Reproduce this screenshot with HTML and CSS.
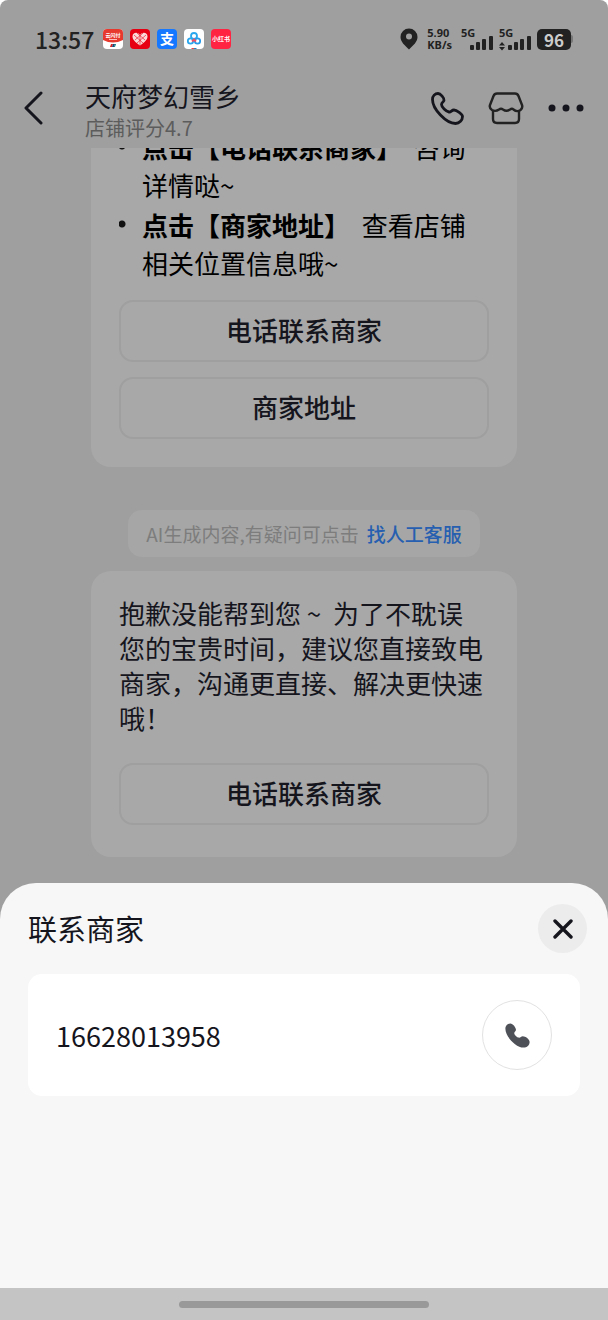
FILE: index.html
```html
<!DOCTYPE html>
<html lang="zh-CN">
<head>
    <meta charset="UTF-8">
    <meta name="viewport" content="width=device-width, initial-scale=1.0">
    <title>天府梦幻雪乡</title>
    <link rel="stylesheet" href="styles.css">
</head>
<body>
    <div class="screen">
        <div class="status-bar">
            <span class="clock">13:57</span>
            <div class="app-icons">
                <svg width="20" height="20" viewBox="0 0 20 20">
                    <rect width="20" height="20" rx="4" fill="#fff"/>
                    <path d="M0 11V4a4 4 0 0 1 4-4h12a4 4 0 0 1 4 4v7q-10 5-20 0z" fill="#e8392f"/>
                    <text x="10" y="8" class="icon-text" font-size="5">云闪付</text>
                    <path d="M6 10.5h8" stroke="#fbb" stroke-width="1"/>
                    <path d="M8 15h2l-1 3H7z" fill="#d22"/>
                    <path d="M10 15h2l-1 3H9z" fill="#124a80"/>
                    <path d="M12 15h1l-1 3h-1z" fill="#087a75"/>
                </svg>
                <svg width="20" height="20" viewBox="0 0 20 20">
                    <rect width="20" height="20" rx="4" fill="#e60012"/>
                    <path d="M10 16.5C5 13 2.5 10.5 2.5 7.5 2.5 3.500 7.500 2.500 10 6c2.500-3.500 7.500-2.500 7.500 1.500 0 3-2.500 5.500-7.500 9z" fill="#fbdada"/>
                    <path d="M4 6l9 8M7 4l8 7M16 6l-9 8M13 4l-8 7M10 6v10" stroke="#e60012" stroke-width=".6"/>
                </svg>
                <svg width="20" height="20" viewBox="0 0 20 20">
                    <rect width="20" height="20" rx="4" fill="#1677ff"/>
                    <text x="10" y="15" class="icon-text" font-size="14">支</text>
                </svg>
                <svg width="20" height="20" viewBox="0 0 20 20">
                    <rect width="20" height="20" rx="4" fill="#fff"/>
                    <g fill="none" stroke-width="1.8">
                        <circle cx="10" cy="7" r="3" stroke="#2ba7ee"/>
                        <circle cx="6.500" cy="12" r="2.700" stroke="#2ba7ee"/>
                        <circle cx="13.500" cy="12" r="2.700" stroke="#2a9be8"/>
                        <path d="M8 12.500l2-2 2 2" stroke="#ee4f66"/>
                    </g>
                    <path d="M7 20l1-1h2v1z" fill="#e44"/>
                    <path d="M10 19h2l1 1h-3z" fill="#28c"/>
                </svg>
                <svg width="20" height="20" viewBox="0 0 20 20">
                    <rect width="20" height="20" rx="4" fill="#ff2442"/>
                    <text x="10" y="12" class="icon-text" font-size="6">小红书</text>
                </svg>
            </div>
            <div class="status-right">
                <svg width="18" height="22" viewBox="0 0 18 22">
                    <path d="M9 .5A8.500 8.500 0 0 0 .5 9C.5 14 5 17.500 9 21.500 13 17.500 17.500 14 17.500 9A8.500 8.500 0 0 0 9 .5z" fill="#222"/>
                    <circle cx="9" cy="8.500" r="3" fill="#9f9f9f"/>
                </svg>
                <div class="speed"><span>5.90</span><span>KB/s</span></div>
                <svg class="signal" width="32" height="26" viewBox="0 -3 32 26" fill="#222">
                    <text x="0" y="8" class="net-text">5G</text>
                    <rect x="9" y="16" width="4" height="5" rx="1"/>
                    <rect x="15" y="13" width="4" height="8" rx="1"/>
                    <rect x="21" y="10" width="4" height="11" rx="1"/>
                    <rect x="28" y="7" width="4" height="14" rx="1"/>
                </svg>
                <svg class="signal" width="32" height="26" viewBox="0 -3 32 26" fill="#222">
                    <text x="0" y="8" class="net-text">5G</text>
                    <path d="M0 16.500l3-3.500 3 3.500zM0 18l3 3.500L6 18z"/>
                    <rect x="9" y="16" width="4" height="5" rx="1"/>
                    <rect x="15" y="13" width="4" height="8" rx="1"/>
                    <rect x="21" y="10" width="4" height="11" rx="1"/>
                    <rect x="28" y="7" width="4" height="14" rx="1"/>
                </svg>
                <div class="battery"><span class="battery-level">96</span><span class="battery-tip"></span></div>
            </div>
        </div>

        <header class="header">
            <button type="button" class="icon-btn" aria-label="返回">
                <svg width="20" height="34" viewBox="0 0 20 34" fill="none" stroke="#15151d" stroke-width="3" stroke-linecap="round" stroke-linejoin="round">
                    <path d="M17 2L2 17l15 15"/>
                </svg>
            </button>
            <div class="shop">
                <h1>天府梦幻雪乡</h1>
                <p>店铺评分4.7</p>
            </div>
            <div class="actions">
                <button type="button" class="icon-btn" aria-label="电话">
                    <svg width="33" height="33" viewBox="0 0 33 33" fill="none" stroke="#15151d" stroke-width="2.800" stroke-linejoin="round">
                        <path d="M7 1.500C9.500 1.500 13.500 6 13 8.500c-.3 1.500-2.500 1.700-2.500 4 0 2.500 4.500 7 7.500 7.500 2.200.3 2.500-2 5-2 2.500 0 8.500 4 8.500 6.500 0 3.500-3 7-7 7C15 31.500 1.500 17 1.500 7.500 1.500 4 4 1.500 7 1.500z"/>
                    </svg>
                </button>
                <button type="button" class="icon-btn" aria-label="店铺">
                    <svg width="36" height="34" viewBox="0 0 36 34" fill="none" stroke="#222" stroke-width="2.400" stroke-linejoin="round">
                        <path d="M9 2.500h18q2.500 0 3.500 2.500l3.500 9q1 3-1.500 5-3.500 2.500-7-.5-1.500-1.500-3.500 0-3.500 2.500-7 0-2-1.500-4 0-3.500 2.500-7 .5Q1 17 2 14l3.500-9q1-2.500 3.500-2.500z"/>
                        <path d="M5 19.500V28q0 4 4 4h18q4 0 4-4v-8.500"/>
                    </svg>
                </button>
                <button type="button" class="icon-btn" aria-label="更多">
                    <svg width="36" height="8" viewBox="0 0 36 8" fill="#15151d">
                        <circle cx="4" cy="4" r="3.500"/>
                        <circle cx="18" cy="4" r="3.500"/>
                        <circle cx="32" cy="4" r="3.500"/>
                    </svg>
                </button>
            </div>
        </header>

        <main class="chat">
            <section class="card">
                <ul class="tips">
                    <li><strong>点击【电话联系商家】</strong> 咨询详情哒~</li>
                    <li><strong>点击【商家地址】</strong> 查看店铺相关位置信息哦~</li>
                </ul>
                <div class="card-buttons">
                    <button type="button" class="card-btn">电话联系商家</button>
                    <button type="button" class="card-btn">商家地址</button>
                </div>
            </section>

            <p class="notice">AI生成内容,有疑问可点击<a href="#service">找人工客服</a></p>

            <section class="card sorry">
                <p class="message">抱歉没能帮到您&nbsp;~&nbsp; 为了不耽误您的宝贵时间，建议您直接致电商家，沟通更直接、解决更快速哦！</p>
                <button type="button" class="card-btn">电话联系商家</button>
            </section>
        </main>

        <section class="sheet">
            <div class="sheet-head">
                <h2>联系商家</h2>
                <button type="button" class="close-btn" aria-label="关闭">
                    <svg width="20" height="20" viewBox="0 0 20 20" stroke="#15151d" stroke-width="3.400" stroke-linecap="round">
                        <path d="M2 2l16 16M18 2L2 18"/>
                    </svg>
                </button>
            </div>
            <div class="phone-card">
                <span class="number">16628013958</span>
                <button type="button" class="call-btn" aria-label="拨打电话">
                    <svg width="25" height="25" viewBox="0 0 33 33" fill="#4e5158">
                        <path d="M7 .5C10.500.5 14.500 6 14.500 9c0 2-2.300 2.500-2.300 4.500 0 2 3.300 5.300 5.800 5.800 2.500.4 3-1.800 5.500-1.800 3.500 0 9 4 9 7.500 0 4-3.500 7.500-8 7.500C14 32.500.5 17.500.5 7.500.5 3.500 3.500.5 7 .5z"/>
                    </svg>
                </button>
            </div>
        </section>

        <div class="nav-bar"><div class="nav-handle"></div></div>
    </div>
</body>
</html>
```
FILE: styles.css
```css
* {
    box-sizing: border-box;
}

body {
    margin: 0;
    font-family: "Noto Sans CJK SC", sans-serif;
    background-color: #fff;
    color: #15151d;
}

h1, h2, p, ul {
    margin: 0;
    padding: 0;
    font-weight: 400;
}

button {
    font-family: inherit;
    color: inherit;
    border: none;
    padding: 0;
    background: none;
    cursor: pointer;
}

svg {
    display: block;
    flex-shrink: 0;
}

.screen {
    display: flex;
    flex-direction: column;
    height: 100vh;
    background-color: #9f9f9f;
    border-radius: 8px 8px 0 0;
    overflow: hidden;
}

/* status bar */
.status-bar {
    display: flex;
    align-items: center;
    flex-shrink: 0;
    height: 68px;
    padding: 10px 35px 0;
    color: #222;
}

.clock {
    font-size: 23px;
    font-weight: 500;
    margin-right: 9px;
}

.app-icons {
    display: flex;
    gap: 7px;
}

.icon-text {
    fill: #fff;
    font-weight: 700;
    text-anchor: middle;
}

.status-right {
    display: flex;
    align-items: center;
    gap: 6px;
    margin-left: auto;
}

.speed {
    display: flex;
    flex-direction: column;
    margin: 0 3px;
    font-family: "Noto Sans", sans-serif;
    font-size: 11px;
    font-weight: 700;
    line-height: 12px;
}

.net-text {
    font-family: "Noto Sans", sans-serif;
    font-size: 11px;
    font-weight: 700;
}

.battery {
    display: flex;
    align-items: center;
}

.battery-level {
    width: 34px;
    border-radius: 5px;
    background-color: #222;
    color: #ccc;
    font-size: 17px;
    font-weight: 700;
    line-height: 21px;
    text-align: center;
}

.battery-tip {
    width: 2px;
    height: 8px;
    border-radius: 0 2px 2px 0;
    background-color: #777;
}

/* header */
.header {
    display: flex;
    align-items: center;
    flex-shrink: 0;
    height: 80px;
    padding: 0 24px;
}

.shop {
    margin-left: 41px;
    padding-top: 5px;
}

.shop h1 {
    font-size: 26px;
    line-height: 34px;
}

.shop p {
    font-size: 20px;
    line-height: 30px;
    color: #5c5c5c;
}

.actions {
    display: flex;
    align-items: center;
    gap: 24px;
    margin-left: auto;
}

/* chat */
.chat {
    display: flex;
    flex-direction: column;
    justify-content: flex-end;
    align-items: center;
    flex: 1;
    min-height: 0;
    padding: 0 91px 26px;
    overflow: hidden;
}

.card {
    width: 100%;
    padding: 28px;
    border-radius: 20px;
    background-color: #a8a8a8;
}

.tips {
    list-style: none;
    color: #000;
    font-size: 26px;
    line-height: 38px;
}

.tips li {
    padding-left: 23px;
    margin-bottom: 2px;
    background: radial-gradient(circle, #111 3px, transparent 4px) no-repeat -1px 14px / 8px 8px;
}

.tips strong {
    font-weight: 700;
    margin-right: 6px;
}

.card-buttons {
    display: flex;
    flex-direction: column;
    gap: 15px;
    margin-top: 18px;
}

.card-btn {
    width: 100%;
    height: 62px;
    border: 2px solid #9f9f9f;
    border-radius: 14px;
    font-size: 26px;
    font-weight: 500;
    line-height: 56px;
    padding-bottom: 2px;
}

.notice {
    margin: 43px 0 14px;
    padding: 0 18px;
    border-radius: 14px;
    background-color: #a6a6a6;
    color: #7d7d7d;
    font-size: 19px;
    line-height: 47px;
    white-space: nowrap;
}

.notice a {
    margin-left: 8px;
    color: #275fb0;
    font-weight: 500;
    text-decoration: none;
}

.sorry {
    padding: 24px 28px 32px;
}

.message {
    padding-right: 4px;
    margin-bottom: 28px;
    font-size: 26px;
    line-height: 35px;
}

/* bottom sheet */
.sheet {
    flex-shrink: 0;
    padding: 21px 28px 192px;
    border-radius: 36px 36px 0 0;
    background-color: #f7f7f7;
}

.sheet-head {
    display: flex;
    justify-content: space-between;
    align-items: center;
    margin-right: -7px;
    margin-bottom: 21px;
}

.sheet-head h2 {
    font-size: 29px;
    line-height: 49px;
}

.close-btn {
    display: flex;
    justify-content: center;
    align-items: center;
    width: 49px;
    height: 49px;
    border-radius: 50%;
    background-color: #ececec;
}

.phone-card {
    display: flex;
    justify-content: space-between;
    align-items: center;
    padding: 26px 28px;
    border-radius: 14px;
    background-color: #fff;
}

.number {
    font-size: 27px;
}

.call-btn {
    display: flex;
    justify-content: center;
    align-items: center;
    width: 70px;
    height: 70px;
    border: 1px solid #e2e2e2;
    border-radius: 50%;
}

/* system gesture bar */
.nav-bar {
    display: flex;
    justify-content: center;
    align-items: center;
    flex-shrink: 0;
    height: 32px;
    background-color: #c4c4c4;
}

.nav-handle {
    width: 41%;
    height: 7px;
    border-radius: 4px;
    background-color: #999;
}
```
